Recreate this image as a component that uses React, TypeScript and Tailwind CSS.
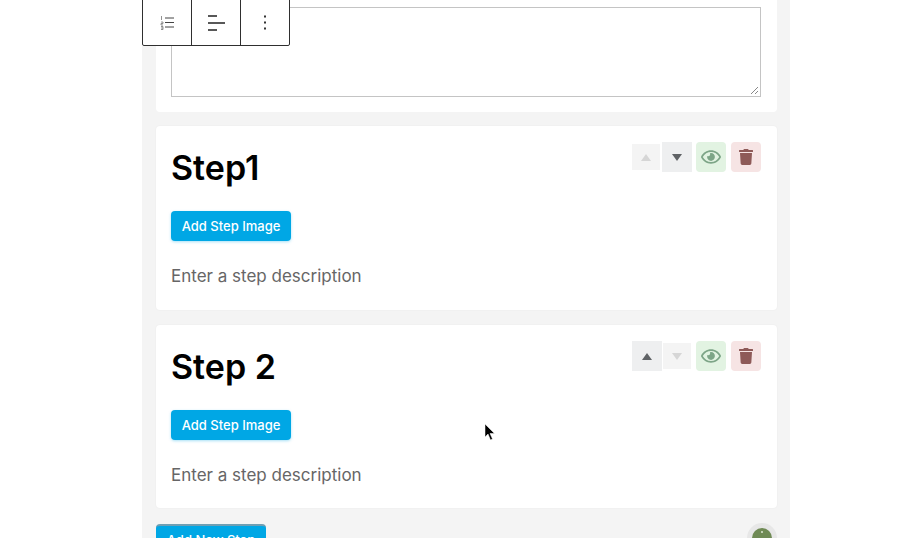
import { FaRegEye, FaTrash } from "react-icons/fa";

function Triangle({ down, color }: { down?: boolean; color: string }) {
  return (
    <svg width="10" height="7" viewBox="0 0 10 7">
      <path d={down ? "M0 0h10L5 7z" : "M0 7h10L5 0z"} fill={color} />
    </svg>
  );
}

function StepControls({ first }: { first?: boolean }) {
  return (
    <div className="flex items-center">
      {first ? (
        <>
          <div className="w-[28px] h-[26px] bg-[#f4f4f4] flex items-center justify-center mr-[2px]">
            <Triangle color="#d6d6d6" />
          </div>
          <div className="w-[30px] h-[30px] bg-[#eeeff0] flex items-center justify-center">
            <Triangle down color="#5f6265" />
          </div>
        </>
      ) : (
        <>
          <div className="w-[30px] h-[30px] bg-[#eeeff0] flex items-center justify-center">
            <Triangle color="#5f6265" />
          </div>
          <div className="w-[28px] h-[26px] bg-[#f4f4f4] flex items-center justify-center ml-[1px] mr-[1px]">
            <Triangle down color="#d6d6d6" />
          </div>
        </>
      )}
      <div className="w-[30px] h-[30px] bg-[#e2f3e2] rounded-sm flex items-center justify-center ml-[4px]">
        <FaRegEye className="text-[#7da587] text-[20px]" />
      </div>
      <div className="w-[30px] h-[30px] bg-[#f6e4e4] rounded-sm flex items-center justify-center ml-[5px]">
        <FaTrash className="text-[#8e5a58] text-[16px]" />
      </div>
    </div>
  );
}

function StepCard({ title, first }: { title: string; first?: boolean }) {
  return (
    <div className={`bg-white rounded-[4px] ${first ? "h-[184px]" : "h-[183px]"} pl-[15px] pr-[16px] pt-[16px] shadow-[0_0_2px_rgba(0,0,0,0.06)]`}>
      <div className="flex justify-between items-start">
        <h2 className="text-[34px] leading-[50px] font-semibold text-black pt-px">{title}</h2>
        <StepControls first={first} />
      </div>
      <div className="mt-[18px] w-[120px] h-[30px] pt-[2px] bg-[#00a7e5] rounded-sm text-white text-[13px] font-medium flex items-center justify-center shadow-[0_1px_3px_rgba(0,167,229,0.35)]">
        Add Step Image
      </div>
      <p className="mt-[22px] text-[17px] leading-[26px] text-[#666]">Enter a step description</p>
    </div>
  );
}

export default function App() {
  return (
    <div className="relative w-[924px] h-[540px] overflow-hidden bg-white font-['Inter',sans-serif]">
      <div className="ml-[142px] w-[648px] h-[538px] overflow-hidden bg-[#f4f4f4] pl-[14px] pr-[13px] flex flex-col">
        <div className="bg-white rounded-b-[4px] h-[112px] pl-[15px] pr-[16px] pt-[7px] shrink-0">
          <div className="relative h-[90px] border border-[#c4c4c4] bg-white">
            <svg className="absolute right-[1px] bottom-[1px]" width="9" height="9" viewBox="0 0 9 9">
              <path d="M1 8L8 1M5 8L8 5" stroke="#888" strokeWidth="1" fill="none" />
            </svg>
          </div>
        </div>
        <div className="mt-[14px] shrink-0">
          <StepCard title="Step1" first />
        </div>
        <div className="mt-[15px] shrink-0">
          <StepCard title="Step 2" />
        </div>
        <div className="mt-[16px] flex justify-between shrink-0">
          <div className="w-[110px] h-[32px] bg-[#00a7e5] border-t-2 border-[#6f9fb3] rounded-sm text-white text-[13px] font-medium flex justify-center pt-[5px]">
            Add New Step
          </div>
          <div className="w-[30px] h-[30px] rounded-full bg-[#e7e7e7] flex items-center justify-center -mt-[1px]">
            <div className="w-[20px] h-[20px] rounded-full bg-[#6f8a55] relative">
              <div className="absolute left-[9px] top-[3px] w-[2px] h-[2px] bg-[#dfe7d5] rounded-full" />
            </div>
          </div>
        </div>
      </div>

      <div className="absolute left-[142px] top-[-1px] h-[47px] w-[148px] bg-white border border-[#2f2f2f] rounded-b-[2px] flex">
        <div className="w-[49px] border-r border-[#2f2f2f] flex items-center justify-center">
          <svg width="15" height="15" viewBox="0 0 15 15">
            <path d="M5 3h9M5 7.5h9M5 12h9" stroke="#444" strokeWidth="1" />
            <path d="M1.5 1v4M1 7h2v1.5H1V10h2M1 11.5h2v3H1M1 13h2" stroke="#777" strokeWidth="0.8" fill="none" />
          </svg>
        </div>
        <div className="w-[49px] border-r border-[#2f2f2f] flex items-center justify-center">
          <svg width="18" height="16" viewBox="0 0 18 16">
            <path d="M1 1h9M1 8h17M1 15h9" stroke="#222" strokeWidth="1.4" />
          </svg>
        </div>
        <div className="flex-1 flex items-center justify-center">
          <svg width="4" height="15" viewBox="0 0 4 15">
            <rect x="1" y="0.5" width="2" height="2" fill="#333" />
            <rect x="1" y="6.5" width="2" height="2" fill="#333" />
            <rect x="1" y="12.5" width="2" height="2" fill="#333" />
          </svg>
        </div>
      </div>

      <svg className="absolute left-[484px] top-[424px]" width="12" height="18" viewBox="0 0 12 18">
        <path d="M1 0v13l3-3 2.5 6 2-1-2.5-5.5h4.5z" fill="#000" stroke="#fff" strokeWidth="0.5" />
      </svg>
    </div>
  );
}
